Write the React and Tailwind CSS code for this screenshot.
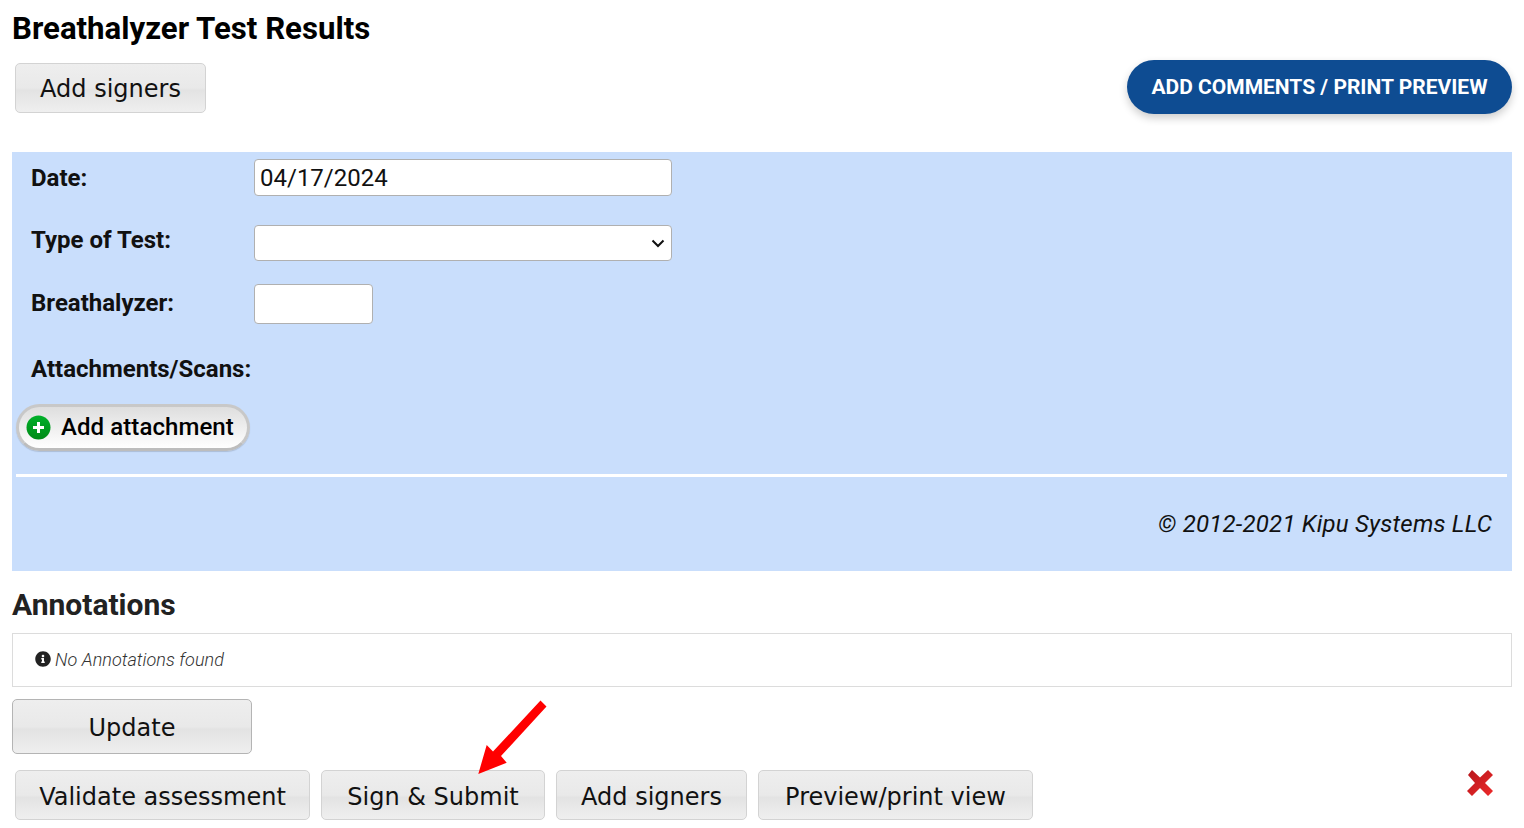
import React from "react";
import { FaInfoCircle } from "react-icons/fa";

const grad = "bg-[linear-gradient(to_bottom,#eeeeee_0%,#e9e9e9_50%,#e3e3e3_55%,#efefef_100%)]";

function GrayBtn({ children, className = "" }) {
  return (
    <button
      type="button"
      className={`h-[50px] rounded-[5px] border ${grad} whitespace-nowrap text-[24px] leading-none text-[#111] font-['DejaVu_Sans',sans-serif] ${className}`}
    >
      {children}
    </button>
  );
}

const field = "box-border rounded-[4px] border border-[#b0b0b0] bg-white";
const label = "font-['Roboto',sans-serif] font-bold text-[24px] leading-[28px] text-[#111] w-[223px] shrink-0";

export default function App() {
  return (
    <div className="w-[1524px] h-[828px] overflow-hidden bg-white px-3 font-['Roboto',sans-serif] text-[#111]">
      <h1 className="pt-[11px] text-[31.2px] leading-[35px] font-bold text-black">Breathalyzer Test Results</h1>

      <div className="flex items-start justify-between h-[106px] pl-[3px]">
        <GrayBtn className="mt-[17px] w-[191px] pt-[2px] border-[#d3d3d3]">Add signers</GrayBtn>
        <button
          type="button"
          className="mt-[14px] h-[54px] w-[385px] rounded-[27px] bg-[#0e4c92] pt-[2px] text-[21px] font-bold whitespace-nowrap text-white shadow-[0_4px_8px_rgba(0,0,0,0.2)]"
        >
          ADD COMMENTS / PRINT PREVIEW
        </button>
      </div>

      <section className="h-[419px] bg-[#c9defc] pt-[7px]">
        <div className="flex pl-[19px] items-start">
          <div className={`${label} pt-[5px]`}>Date:</div>
          <input defaultValue="04/17/2024" className={`${field} h-[37px] w-[418px] px-[5px] text-[24px] text-[#111] outline-none`} />
        </div>
        <div className="mt-[29px] flex pl-[19px] items-start">
          <div className={`${label} pt-px`}>Type of Test:</div>
          <div className="relative h-[36px] w-[418px]">
            <select className={`${field} h-[36px] w-full appearance-none text-[24px]`}><option></option></select>
            <svg width="14" height="9" viewBox="0 0 14 9" className="pointer-events-none absolute left-[397px] top-[14px]">
              <path d="M1.5 1.5 L7 7 L12.5 1.5" fill="none" stroke="#111" strokeWidth="2" />
            </svg>
          </div>
        </div>
        <div className="mt-[23px] flex pl-[19px] items-start">
          <div className={`${label} pt-[5px]`}>Breathalyzer:</div>
          <input className={`${field} h-[40px] w-[119px] outline-none`} />
        </div>
        <div className={`${label} mt-[31px] ml-[19px] w-auto`}>Attachments/Scans:</div>
        <button
          type="button"
          className="ml-[4px] mt-[21px] flex h-[47px] w-[234px] items-center rounded-[24px] border-[3px] border-[#c8c8c8] border-b-[#bdbdbd] bg-[linear-gradient(to_bottom,#dedede,#ffffff)] pb-[2px] pl-[7px] text-[24px] font-medium tracking-[0.08px] whitespace-nowrap text-black shadow-[0_1px_1px_rgba(0,0,0,0.15)]"
        >
          <svg width="25" height="25" viewBox="0 0 25 25" className="mt-[2px] shrink-0">
            <defs>
              <linearGradient id="g" x1="0" y1="0" x2="0" y2="1">
                <stop offset="0" stopColor="#00b02a" />
                <stop offset="1" stopColor="#008a16" />
              </linearGradient>
            </defs>
            <circle cx="12.5" cy="12.5" r="12" fill="url(#g)" />
            <path d="M12.5 7v11M7 12.5h11" stroke="#fff" strokeWidth="3" />
          </svg>
          <span className="ml-[10px]">Add attachment</span>
        </button>
        <div className="ml-[4px] mt-[23px] h-[3px] w-[1491px] bg-white" />
        <p className="mt-[33px] pr-[20px] text-right text-[24px] leading-[28px] italic tracking-[0.22px] text-[#111]">© 2012-2021 Kipu Systems LLC</p>
      </section>

      <h2 className="mt-[16px] text-[30px] leading-[35px] font-bold text-[#222]">Annotations</h2>
      <div className="mt-[11px] flex h-[54px] items-center border border-[#dcdcdc] pb-[2px] pl-[22px] text-[18px] font-light italic tracking-[0.05px] text-[#333]">
        <FaInfoCircle className="mr-[4px] h-[16px] w-[16px] text-[#222]" />
        No Annotations found
      </div>

      <GrayBtn className="mt-[12px] block !h-[55px] w-[240px] border-[#b4b4b4] pt-[2px]">Update</GrayBtn>

      <div className="mt-[16px] flex items-start pl-[3px]">
        <GrayBtn className="w-[295px] pt-[4px] border-[#d3d3d3]">Validate assessment</GrayBtn>
        <div className="relative ml-[11px]">
          <GrayBtn className="w-[224px] pt-[4px] border-[#d3d3d3]">Sign &amp; Submit</GrayBtn>
          <svg width="70" height="76" viewBox="0 0 70 76" className="absolute left-[156px] top-[-71px]">
            <path d="M63.5 1.5 L69.5 7.5 L24 57 L29.7 63.7 L1.3 75 L9.7 46 L16 52.5 Z" fill="#ff0000" />
          </svg>
        </div>
        <GrayBtn className="ml-[11px] w-[191px] pt-[4px] border-[#d3d3d3]">Add signers</GrayBtn>
        <GrayBtn className="ml-[11px] w-[275px] pt-[4px] border-[#d3d3d3]">Preview/print view</GrayBtn>
        <svg width="30" height="30" viewBox="0 0 30 30" className="ml-[432px] mt-[-2px]">
          <defs>
            <linearGradient id="x" x1="0" y1="0" x2="1" y2="1">
              <stop offset="0" stopColor="#b5151b" />
              <stop offset="1" stopColor="#ee2a2a" />
            </linearGradient>
          </defs>
          <path d="M3 7 L7 2 L15 9.5 L23 2 L28 7 L20 15 L28 23 L23 28 L15 20 L7 28 L2 23 L10 15 Z" fill="url(#x)" />
        </svg>
      </div>
    </div>
  );
}
